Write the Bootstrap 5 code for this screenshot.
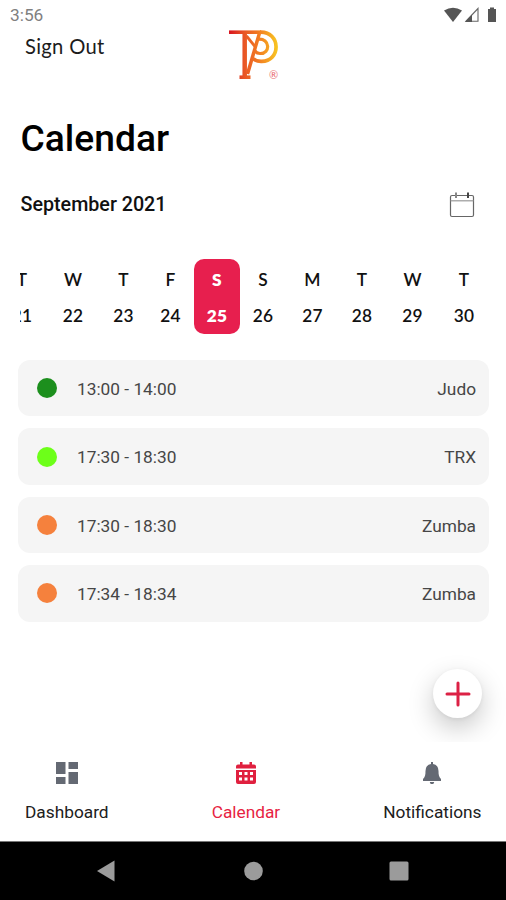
<!DOCTYPE html>
<html lang="en">
<head>
<meta charset="utf-8">
<meta name="viewport" content="width=device-width, initial-scale=1">
<title>Calendar</title>
<link href="https://cdn.jsdelivr.net/npm/bootstrap@5.3.0/dist/css/bootstrap.min.css" rel="stylesheet">
<style>
  body { font-family: Roboto, "Liberation Sans", sans-serif; color: #111; background: #fff; }
  svg { display: block; flex: none; }
  .screen { width: 506px; height: 900px; }
  .status { height: 30px; padding: 0 8px 0 10px; color: #808080; font-size: 17.3px; }
  .status span { padding-top: 1px; }
  .top-row { height: 52px; }
  .sign-out { font: 400 20.2px/32px Lato, sans-serif; letter-spacing: .3px; color: #1c1c1c; padding: 0 0 0 25px; width: 227px; background: none; border: 0; text-align: left; }
  .brand { width: 54px; height: 52px; }
  .title { font-size: 37.2px; line-height: 46px; font-weight: 500; color: #000; margin: 33px 0 0 20.5px; }
  .month-row { margin: 28px 31px 0 20.5px; height: 32px; }
  .month { font-size: 19.7px; font-weight: 500; line-height: 32px; color: #111; }
  .week { margin: 38px 19px 0 20px; height: 75px; font: 600 17.3px/22px Lato, sans-serif; color: #111; letter-spacing: .2px; }
  .week-track { display: grid; grid-template-columns: 48px 54px 47px 47px 46px 46px 53px 46px 55px 48px; margin-left: -22px; width: 490px; height: 75px; }
  .day { border-radius: 10px; padding: 10px 0 0; text-align: center; }
  .day span { display: block; margin-bottom: 14px; }
  .day.chosen { background: #e71f4e; color: #fff; font-weight: 800; }
  .sessions { margin: 26px 17px 0 18px; gap: 12px; }
  .session { height: 56.4px; border-radius: 12px; background: #f5f5f5; padding: 2px 13px 0 19px; font-size: 17.3px; color: #464646; }
  .session span { padding-top: 1px; }
  .dot { width: 20px; height: 20px; margin: -2px 20px 0 0; }
  .dot-green { background: #1c8f1d; }
  .dot-lime { background: #6dff19; }
  .dot-orange { background: #f5813d; }
  .fab-row { height: 121px; padding: 47.5px 24px 0 0; }
  .fab { width: 49px; height: 49px; background: #fff; border: 0; padding: 0; box-shadow: 0 10px 26px rgba(0,0,0,.22), 0 1px 4px rgba(0,0,0,.06); }
  .tabs { height: 100px; background: #fff; border-bottom: 1px solid #777; padding: 0 24.5px 0 25px; }
  .tab { color: #202020; font-size: 17.3px; line-height: 22px; text-decoration: none; padding-top: 20px; }
  .tab svg { margin-bottom: 17px; }
  .tab.current { color: #e71f43; }
  .system-nav { height: 58px; background: #000; }
  .system-nav svg { fill: #9b9b9b; }
</style>
</head>
<body>
<div class="screen d-flex flex-column overflow-hidden mx-auto">
  <header>
    <div class="status d-flex align-items-center justify-content-between">
      <span>3:56</span>
      <svg width="56" height="18" viewBox="0 0 56 18">
        <path d="M2 4.500Q11 -1 20 4.500L11 16Z" fill="#555"/>
        <path d="M24 15.200L36 2.500V15.200Z" fill="none" stroke="#666" stroke-width="1.1"/>
        <path d="M23 16L30 8.500V16Z" fill="#555"/>
        <path d="M46 3H48V1.500H52V3H54V16H46Z" fill="#555"/>
      </svg>
    </div>
    <div class="top-row d-flex align-items-start">
      <button class="sign-out">Sign Out</button>
      <svg class="brand" viewBox="0 0 54 52">
        <defs>
          <linearGradient id="brandInk" gradientUnits="userSpaceOnUse" x1="2" y1="8" x2="51" y2="8">
            <stop offset="0" stop-color="#d8141f"/><stop offset=".3" stop-color="#e85426"/><stop offset=".6" stop-color="#f27a22"/><stop offset="1" stop-color="#f8c822"/>
          </linearGradient>
        </defs>
        <g fill="none" stroke="url(#brandInk)">
          <path d="M2 2.200H34" stroke-width="3.600"/>
          <path d="M33 2.200C54.500 1.500 54 32 34 31.300C30 31.300 28 30.500 26 28.500" stroke-width="3.700"/>
          <path d="M17.700 3V47" stroke-width="4.500"/>
          <path d="M12.500 47.200H23.500" stroke-width="3.600"/>
          <path d="M32.500 3L20.500 44" stroke-width="3.500"/>
          <path d="M19.500 6L28.500 17" stroke-width="2.800"/>
          <path d="M31 9.300C43.500 8 43.500 24 33 23.500C30.500 23.500 28.500 22 27.500 20.500" stroke-width="3.200"/>
        </g>
        <text x="46.500" y="48.500" text-anchor="middle" font-family="Lato, sans-serif" font-size="11" fill="#e96a70">®</text>
      </svg>
    </div>
  </header>

  <main class="flex-grow-1 overflow-hidden">
    <h1 class="title">Calendar</h1>
    <div class="month-row d-flex align-items-center justify-content-between">
      <h2 class="month mb-0">September 2021</h2>
      <svg width="26" height="26" viewBox="0 0 26 26" fill="none" stroke="#666" stroke-width="1.2">
        <rect x="1.500" y="3.500" width="23" height="21" rx="1.500"/>
        <path d="M1.500 8.800H24.500" stroke="#999"/>
        <path d="M7 .5V6" stroke="#888" stroke-width="2"/><path d="M19 .5V6" stroke="#444" stroke-width="2"/>
      </svg>
    </div>
    <div class="week overflow-hidden">
      <div class="week-track">
        <div class="day"><span>T</span>21</div>
        <div class="day"><span>W</span>22</div>
        <div class="day"><span>T</span>23</div>
        <div class="day"><span>F</span>24</div>
        <div class="day chosen"><span>S</span>25</div>
        <div class="day"><span>S</span>26</div>
        <div class="day"><span>M</span>27</div>
        <div class="day"><span>T</span>28</div>
        <div class="day"><span>W</span>29</div>
        <div class="day"><span>T</span>30</div>
      </div>
    </div>
    <div class="sessions d-flex flex-column">
      <div class="session d-flex align-items-center"><i class="dot dot-green rounded-circle"></i><span>13:00 - 14:00</span><span class="ms-auto">Judo</span></div>
      <div class="session d-flex align-items-center"><i class="dot dot-lime rounded-circle"></i><span>17:30 - 18:30</span><span class="ms-auto">TRX</span></div>
      <div class="session d-flex align-items-center"><i class="dot dot-orange rounded-circle"></i><span>17:30 - 18:30</span><span class="ms-auto">Zumba</span></div>
      <div class="session d-flex align-items-center"><i class="dot dot-orange rounded-circle"></i><span>17:34 - 18:34</span><span class="ms-auto">Zumba</span></div>
    </div>
    <div class="fab-row d-flex justify-content-end">
      <button class="fab rounded-circle d-flex align-items-center justify-content-center" aria-label="Add">
        <svg width="26" height="26" viewBox="0 0 26 26" stroke="#dc2145" stroke-width="3" stroke-linecap="round"><path d="M13 2V24M2 13H24"/></svg>
      </button>
    </div>
  </main>

  <nav class="tabs d-flex justify-content-between flex-shrink-0">
    <a href="#" class="tab d-flex flex-column align-items-center">
      <svg width="24" height="22" viewBox="0 0 24 22" fill="#646973"><path d="M1 0H10.500V12H1ZM13.500 0H23V7H13.500ZM1 15H10.500V22H1ZM13.500 10H23V22H13.500Z"/></svg>
      Dashboard
    </a>
    <a href="#" class="tab current d-flex flex-column align-items-center">
      <svg width="20" height="22" viewBox="0 0 20 22" fill="#e0203f"><path fill-rule="evenodd" d="M4 0H6.500V2.500H13.500V0H16V2.500H18Q20 2.500 20 4.500V6.500H0V4.500Q0 2.500 2 2.500H4ZM0 8H20V20Q20 22 18 22H2Q0 22 0 20ZM3 10V13H6V10ZM8.500 10V13H11.500V10ZM14 10V13H17V10ZM3 15.500V18.500H6V15.500ZM8.500 15.500V18.500H11.500V15.500ZM14 15.500V18.500H17V15.500Z"/></svg>
      Calendar
    </a>
    <a href="#" class="tab d-flex flex-column align-items-center">
      <svg width="18" height="22" viewBox="0 0 18 22" fill="#646973"><path d="M8 0H10V2Q15.500 3 15.500 9C15.500 13 16 15 18 17V19H0V17C2 15 2.500 13 2.500 9Q2.500 3 8 2ZM6.800 20H11.200Q10.800 22.300 9 22.300Q7.200 22.300 6.800 20Z"/></svg>
      Notifications
    </a>
  </nav>
  <div class="system-nav flex-shrink-0">
    <svg width="506" height="58" viewBox="0 1 506 58"><path d="M97 30L114.500 19.500V40.500Z"/><circle cx="253.500" cy="30" r="9.300"/><rect x="389.500" y="20.500" width="19" height="19" rx="1.500"/></svg>
  </div>
</div>
<script src="https://cdn.jsdelivr.net/npm/bootstrap@5.3.0/dist/js/bootstrap.bundle.min.js"></script>
</body>
</html>
